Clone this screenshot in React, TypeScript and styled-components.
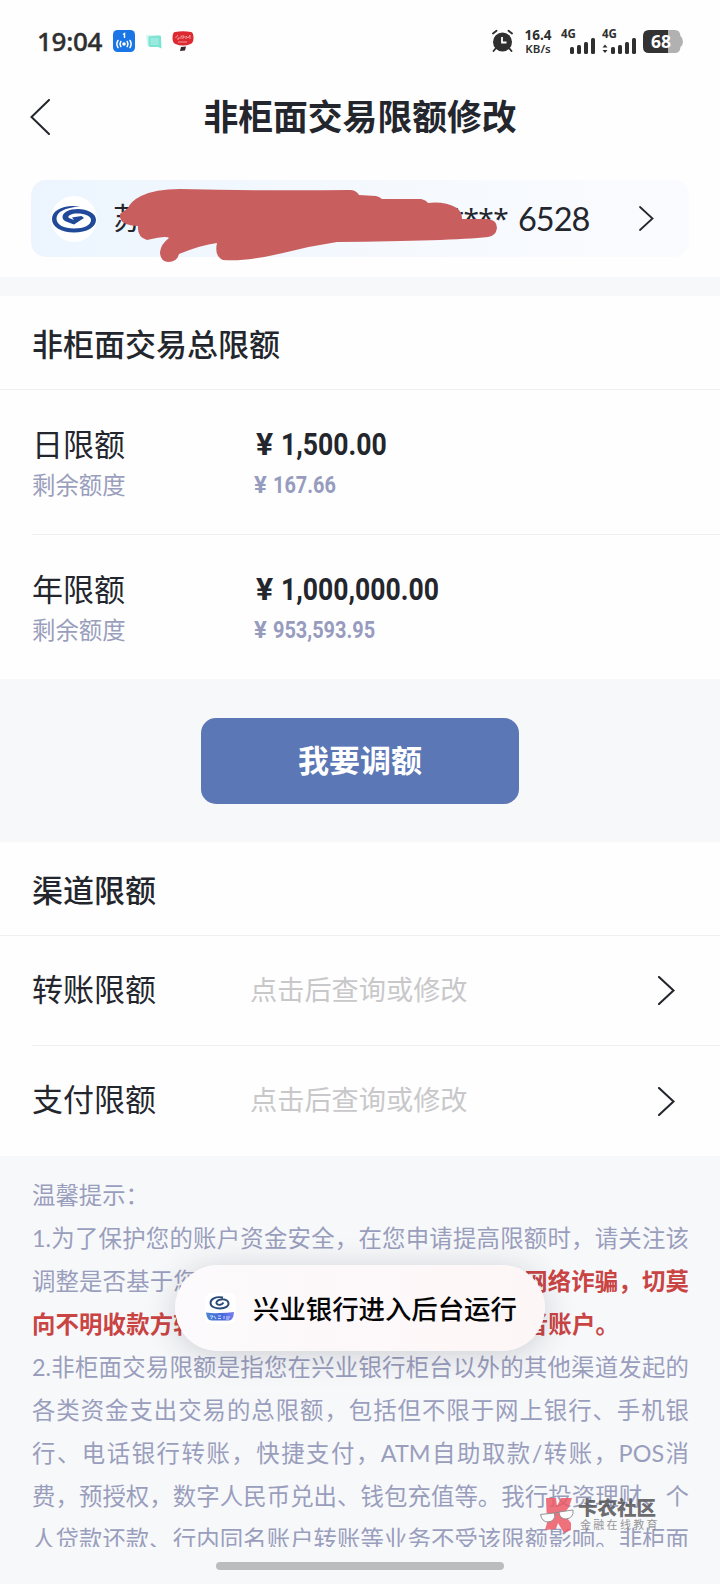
import React from 'react';
import styled, { createGlobalStyle } from 'styled-components';

const cjk = '"Noto Sans CJK SC", sans-serif';

const GlobalStyle = createGlobalStyle`
  * { box-sizing: border-box; }
  body { margin: 0; background: #f7f8fa; font-family: Lato, ${cjk}; color: #24262d; }
`;

const Screen = styled.main`
  position: relative;
  display: flex;
  flex-direction: column;
  width: 720px;
  height: 1584px;
  overflow: hidden;
  background: #f7f8fa;
`;

const StatusBar = styled.header`
  display: flex;
  align-items: center;
  height: 82px;
  padding: 0 37px 0 37px;
  background: #fefefe;
  color: #2f2f2f;
`;

const Clock = styled.span`
  width: 76px;
  margin-top: -1px;
  font: 500 26px/30px "Noto Sans", sans-serif;
  letter-spacing: -0.3px;
  white-space: nowrap;
  -webkit-text-stroke: 0.4px #2f2f2f;
`;

const StatusIcons = styled.div`
  flex: 1;
  display: flex;
  align-items: center;
`;

const NetSpeed = styled.div`
  display: flex;
  flex-direction: column;
  align-items: center;
  width: 28px;
  margin: 1px 9px 0 10px;
  font: 700 12px/12px "Noto Sans", sans-serif;
  white-space: nowrap;
`;

const SpeedValue = styled.span`
  font-size: 13.5px;
  line-height: 13px;
`;

const SpeedUnit = styled.span`
  font-size: 11.5px;
  line-height: 13px;
  font-weight: 600;
`;

const Signal = styled.svg`
  margin-right: 5px;
`;

const NavBar = styled.nav`
  display: flex;
  align-items: center;
  height: 70px;
  padding: 0 30px;
  background: #fefefe;
`;

const BackButton = styled.div`
  display: flex;
  margin-top: -1px;
`;

const NavTitle = styled.h1`
  flex: 1;
  margin: -5px 20px 0 0;
  text-align: center;
  font: 700 34.8px/50px ${cjk};
`;

const CardArea = styled.section`
  height: 125px;
  padding: 28px 31px 20px;
  background: #fefefe;
`;

const AccountCard = styled.div`
  position: relative;
  display: flex;
  align-items: center;
  height: 77px;
  padding: 0 35px 0 20px;
  border-radius: 15px;
  background: linear-gradient(90deg, #ecf5fe, #f5f9fe 55%, #fafbfe);
`;

const LogoDisc = styled.div`
  display: flex;
  align-items: center;
  justify-content: center;
  width: 46px;
  height: 46px;
  border-radius: 50%;
  background: #fff;
`;

const BankName = styled.span`
  margin: -5px 0 0 16px;
  font: 400 30px/44px ${cjk};
`;

const CardMask = styled.span`
  margin-left: auto;
  margin-top: -1px;
  font: 400 28px/40px "Noto Sans", sans-serif;
  letter-spacing: -0.6px;
`;

const CardTail = styled.span`
  width: 75px;
  margin: 0 46px 0 10px;
  font: 400 32.5px/40px Lato, sans-serif;
  letter-spacing: -1px;
`;

const Scribble = styled.svg`
  position: absolute;
  left: 84px;
  top: 4px;
`;

const Panel = styled.section<{ $top?: number }>`
  margin-top: ${(p) => p.$top ?? 0}px;
  background: #fefefe;
`;

const PanelTitle = styled.h2`
  height: 94px;
  margin: 0;
  padding: 0 32px;
  border-bottom: 1px solid #efeff1;
  font: 500 31px/94px ${cjk};
`;

const LimitRow = styled.div<{ $last?: boolean }>`
  display: grid;
  grid-template-columns: 220px 1fr;
  grid-template-rows: 46px 36px;
  align-items: center;
  height: ${(p) => (p.$last ? 144 : 145)}px;
  margin-left: 32px;
  padding-top: 30px;
  border-bottom: ${(p) => (p.$last ? 0 : 1)}px solid #efeff1;
`;

const Label = styled.span`
  font: 400 31px/46px ${cjk};
`;

const SubLabel = styled.span`
  color: #9a9ebd;
  font: 400 23.4px/36px ${cjk};
`;

const Amount = styled.span<{ $small?: boolean }>`
  display: flex;
  align-items: center;
  gap: ${(p) => (p.$small ? 6 : 8)}px;
  padding: ${(p) => (p.$small ? '1px 0 0 2px' : '1px 0 0 4px')};
  color: ${(p) => (p.$small ? '#979cbf' : '#24262d')};
  font: 700 ${(p) => (p.$small ? '24px/36px' : '32px/46px')} Roboto, sans-serif;
`;

const Digits = styled.span`
  transform: scaleX(0.83);
  transform-origin: left center;
`;

const ActionArea = styled.div`
  display: flex;
  justify-content: center;
  padding: 39px 0 38px;
`;

const PrimaryButton = styled.button`
  width: 318px;
  height: 86px;
  padding: 0 0 5px;
  border: 0;
  border-radius: 15px;
  background: #5b77b5;
  color: #fff;
  font: 700 31px/78px ${cjk};
`;

const LinkRow = styled.div<{ $last?: boolean }>`
  display: flex;
  align-items: center;
  height: 110px;
  margin-left: 32px;
  padding-right: 45px;
  border-bottom: ${(p) => (p.$last ? 0 : 1)}px solid #efeff1;
`;

const LinkLabel = styled(Label)`
  width: 218px;
  margin-top: -6px;
`;

const Placeholder = styled.span`
  flex: 1;
  margin-top: -6px;
  color: #c8c8ca;
  font: 400 27.2px/40px ${cjk};
`;

const Tips = styled.section`
  height: 391px;
  padding: 18px 31px 0 32px;
  overflow: hidden;
  color: #9a9ebd;
  font: 400 23.4px/43px Lato, ${cjk};
`;

const TipLine = styled.div<{ $natural?: boolean }>`
  height: 43px;
  white-space: nowrap;
  text-align: justify;
  text-align-last: ${(p) => (p.$natural ? 'left' : 'justify')};
`;

const TipSplit = styled.div<{ $end: number }>`
  display: flex;
  justify-content: space-between;
  height: 43px;
  padding-right: ${(p) => p.$end}px;
  letter-spacing: 0.15px;
`;

const Warning = styled.strong`
  color: #c94443;
  font-weight: 700;
`;

const Toast = styled.div`
  position: absolute;
  left: 175px;
  top: 1265px;
  display: flex;
  align-items: center;
  width: 370px;
  height: 86px;
  padding-left: 30px;
  border-radius: 43px;
  background: linear-gradient(90deg, #fcfafc, #fdf7f8 75%, #fcf6f7);
  box-shadow: 0 4px 32px rgba(40, 44, 60, 0.2);
  color: #050505;
`;

const ToastText = styled.span`
  margin: -1px 0 0 17px;
  font: 500 26.4px/40px ${cjk};
`;

const Watermark = styled.div`
  position: absolute;
  left: 540px;
  top: 1496px;
  display: flex;
  gap: 4px;
  opacity: 0.85;
`;

const WatermarkText = styled.div`
  display: flex;
  flex-direction: column;
  color: #555558;
  font-family: ${cjk};
`;

const WatermarkName = styled.span`
  font-size: 19.5px;
  font-weight: 900;
  line-height: 22px;
`;

const WatermarkSub = styled.span`
  padding-left: 2px;
  color: #858588;
  font-size: 11px;
  line-height: 13px;
  letter-spacing: 2.3px;
`;

const HomeBar = styled.div`
  position: absolute;
  left: 216px;
  top: 1562px;
  width: 288px;
  height: 8px;
  border-radius: 4px;
  background: #babcbd;
`;

const BankLogo = () => (
  <svg width="44" height="28" viewBox="0 0 44 28" fill="#20499a">
    <path d="M28 1.500 C12 -1 0 5 0 14 C0 22 9 27.500 22 27.500 C35 27.500 44 22 44 15 C44 8 35 4 26 4 C17 4 10.500 7.500 10.500 12 C10.500 14 12 15.500 14 16.500 L22 19.500 L32 13 L29.500 11 L20 12.500 L22 15 L17 13 C15 11.500 18 8.500 25 8.500 C33 8.500 39 11 39 15 C39 20 32 23.500 22 23.500 C12 23.500 4.500 20 4.500 13.500 C4.500 7 13 2.500 28 1.500 Z" />
  </svg>
);

const Chevron = ({ w, h, stroke, flip }: { w: number; h: number; stroke: number; flip?: boolean }) => (
  <svg width={w} height={h} viewBox={`0 0 ${w} ${h}`} fill="none" stroke="#24262d" strokeWidth={stroke} strokeLinecap="round">
    <path d={flip ? `M${w - 1} 1 L1.500 ${h / 2} L${w - 1} ${h - 1}` : `M1 1 L${w - 1.5} ${h / 2} L1 ${h - 1}`} />
  </svg>
);

const HotspotIcon = () => (
  <svg width="22" height="22" viewBox="0 0 22 22">
    <rect width="22" height="22" rx="4.500" fill="#1a76e6" />
    <path d="M10 4.500 L11.500 3.500 V8" stroke="#fff" strokeWidth="1.400" fill="none" />
    <circle cx="11" cy="14" r="1.800" fill="#fff" />
    <g stroke="#fff" strokeWidth="1.500" fill="none" strokeLinecap="round">
      <path d="M7.800 11.500 Q6.200 14 7.800 16.500 M14.200 11.500 Q15.800 14 14.200 16.500 M5 10.500 Q2.700 14 5 17.500 M17 10.500 Q19.300 14 17 17.500" />
    </g>
  </svg>
);

const NoteSvg = styled.svg`
  margin-left: 11px;
`;

const NoteIcon = () => (
  <NoteSvg width="16" height="15" viewBox="0 0 16 15">
    <path d="M0 1 H13 V12 H1.500 Z" fill="#d3f7ee" />
    <path d="M2.500 2.500 L14 1.500 Q15 1.500 15 3 L15.500 14.500 L12 13 H4 Q2.500 13 2.500 11 Z" fill="#7fe3d3" />
    <path d="M4.500 4 H12.500 V11 H4.500 Z" fill="#98ebde" />
  </NoteSvg>
);

const SignSvg = styled.svg`
  margin-left: 10px;
`;

const SignIcon = () => (
  <SignSvg width="22" height="21" viewBox="0 0 22 21">
    <path d="M9 16 L14 15.500 L13 19.500 L8 20 Z" fill="#3a2a2c" />
    <path d="M3 1 Q11 -0.500 19 1 Q21.500 1.500 21.500 7 Q21.500 12 18.500 13 Q15 14.500 11 14.500 Q7 14.500 3.500 13 Q0.500 12 0.500 7 Q0.500 1.500 3 1 Z" fill="#dd2a30" />
    <path d="M3.500 7 L6 4 M5 8 H7 V6 M9 8 V5 H12 V7 H10 M14 8 V5 L16 7 L18 4 V8 M6 11 H15" stroke="#f7b6b4" strokeWidth="0.800" fill="none" />
  </SignSvg>
);

const AlarmIcon = () => (
  <svg width="23" height="24" viewBox="0 0 23 24" fill="none" stroke="#2f2f2f">
    <circle cx="11.500" cy="13" r="9.500" fill="#2f2f2f" stroke="none" />
    <path d="M2 4.500 L5.500 1.800 M21 4.500 L17.500 1.800 M5 19 L2.500 22 M18 19 L20.500 22" strokeWidth="1.900" strokeLinecap="round" />
    <path d="M11 8 V13.500 H15.500" stroke="#fff" strokeWidth="1.800" />
  </svg>
);

const SignalBars = ({ data }: { data?: boolean }) => (
  <Signal width="36" height="30" viewBox="0 -3 36 30" fill="#2f2f2f">
    <text x="0" y="9" fontFamily="Noto Sans, sans-serif" fontWeight="700" fontSize="11.500">4G</text>
    {data && <path d="M0.500 18.500 L3 15.500 L5.500 18.500 Z M0.500 21 L3 24 L5.500 21 Z" />}
    <rect x="9" y="18" width="4" height="7" rx="1.500" />
    <rect x="16" y="16" width="4" height="9" rx="1.500" />
    <rect x="23" y="13" width="4" height="12" rx="1.500" />
    <rect x="30" y="9" width="4" height="16" rx="1.500" />
  </Signal>
);

const BatteryIcon = () => (
  <svg width="40" height="23" viewBox="0 0 40 23">
    <path d="M25 0 H32 Q37 0 37.500 6 Q40 8 40 11.500 Q40 15 37.500 17 Q37 23 32 23 H25 Z" fill="#b1b1b1" />
    <path d="M6 0 H25 V23 H6 Q0 23 0 17 V6 Q0 0 6 0 Z" fill="#333" />
    <text x="18" y="17.500" textAnchor="middle" fill="#fff" fontFamily="Noto Sans, sans-serif" fontWeight="700" fontSize="17.500">68</text>
  </svg>
);

const ToastIcon = () => (
  <svg width="31" height="31" viewBox="0 0 31 31">
    <defs>
      <linearGradient id="toastBand" x1="0" x2="1">
        <stop offset="0" stopColor="#4a86cf" />
        <stop offset="0.6" stopColor="#4a68dc" />
        <stop offset="1" stopColor="#7a7ff0" />
      </linearGradient>
    </defs>
    <rect width="31" height="31" rx="7" fill="#fff" />
    <path
      d="M18 4.500 C10 3 5.500 6.500 5.500 10 C5.500 14 11 15.500 15 15.500 C20.500 15.500 24 13 23.500 10 C23 7 19 5.800 16 6.500 C12 7 10.500 9.500 12 11 C13.500 12.500 17 12 18.500 9.500"
      fill="none"
      stroke="#2a4a78"
      strokeWidth="1.900"
    />
    <path d="M1 19.500 Q8 20.500 15 20 Q22 20 29 19 Q28.500 27.500 24 27.500 H7 Q2 28 1 19.500 Z" fill="url(#toastBand)" />
    <path d="M5 23 H8 L6 26 M9 23 L11 26 M13 23 H16 M13 25.500 H16 M19 23 V26 M21 24 H25 M21 26 H24" stroke="#dbe5ff" strokeWidth="0.900" fill="none" />
  </svg>
);

const WatermarkMark = () => (
  <svg width="34" height="38" viewBox="0 0 34 38">
    <path d="M6 2 H16 L17 10 L21 2 H32 L29 11 L24 18 L31 27 V34 L24 37 L18 27 L16 33 L5 34 L7 27 Z" fill="#ee5a67" />
    <path d="M1 18 L14.500 17 Q16 25 8 26 Q2 26 1 18 Z M19 16 L33 14 Q34 22 26 23 Q19.500 23 19 16 Z" fill="#fff" />
    <path d="M0.500 18.500 L14.500 17 Q16 25 8 26 Q2 26 0.500 18.500 Z M14.500 17 L19 16 L33 14 Q34 22 26 23 Q19.500 23 19 16" fill="none" stroke="#77777a" strokeWidth="0.900" />
  </svg>
);

type LimitProps = { label: string; total: string; rest: string; last?: boolean };

const Limit = ({ label, total, rest, last }: LimitProps) => (
  <LimitRow $last={last}>
    <Label>{label}</Label>
    <Amount>¥<Digits>{total}</Digits></Amount>
    <SubLabel>剩余额度</SubLabel>
    <Amount $small>¥<Digits>{rest}</Digits></Amount>
  </LimitRow>
);

const Channel = ({ label, last }: { label: string; last?: boolean }) => (
  <LinkRow $last={last}>
    <LinkLabel>{label}</LinkLabel>
    <Placeholder>点击后查询或修改</Placeholder>
    <Chevron w={17} h={29} stroke={2.1} />
  </LinkRow>
);

export default function App() {
  return (
    <Screen>
      <GlobalStyle />
      <StatusBar>
        <Clock>19:04</Clock>
        <StatusIcons>
          <HotspotIcon />
          <NoteIcon />
          <SignIcon />
        </StatusIcons>
        <AlarmIcon />
        <NetSpeed>
          <SpeedValue>16.4</SpeedValue>
          <SpeedUnit>KB/s</SpeedUnit>
        </NetSpeed>
        <SignalBars />
        <SignalBars data />
        <BatteryIcon />
      </StatusBar>

      <NavBar>
        <BackButton><Chevron w={20} h={36} stroke={2} flip /></BackButton>
        <NavTitle>非柜面交易限额修改</NavTitle>
      </NavBar>

      <CardArea>
        <AccountCard>
          <LogoDisc><BankLogo /></LogoDisc>
          <BankName>苏</BankName>
          <CardMask>****</CardMask>
          <CardTail>6528</CardTail>
          <Chevron w={15} h={25} stroke={1.8} />
          <Scribble width="390" height="84" viewBox="115 184 390 84" fill="#c95e5f">
            <path d="M128 208 Q131 201 141 196 Q155 189 180 189 Q265 191 350 190 Q356 190 359 195 L376 196 Q380 197 382 199 L421 199 Q426 200 428 203 Q444 201 457 208 Q462 212 462 219 L488 219 Q497 220 497 228 Q496 236 488 237 Q450 241 337 242 Q310 246 283 253 Q245 262 223 260 Q214 256 217 243 Q201 245 179 254 Q177 262 168 262 Q160 261 160 252 Q161 244 169 238 Q167 235 147 240 Q137 237 138 226 Q130 226 124 223 Q119 219 120 214 Z" />
          </Scribble>
        </AccountCard>
      </CardArea>

      <Panel $top={19}>
        <PanelTitle>非柜面交易总限额</PanelTitle>
        <Limit label="日限额" total="1,500.00" rest="167.66" />
        <Limit label="年限额" total="1,000,000.00" rest="953,593.95" last />
      </Panel>

      <ActionArea>
        <PrimaryButton>我要调额</PrimaryButton>
      </ActionArea>

      <Panel>
        <PanelTitle>渠道限额</PanelTitle>
        <Channel label="转账限额" />
        <Channel label="支付限额" last />
      </Panel>

      <Tips>
        <TipLine $natural>温馨提示：</TipLine>
        <TipLine>1.为了保护您的账户资金安全，在您申请提高限额时，请关注该</TipLine>
        <TipSplit $end={0}>
          <span>调整是否基于您</span>
          <Warning>网络诈骗，切莫</Warning>
        </TipSplit>
        <TipSplit $end={70}>
          <Warning>向不明收款方转</Warning>
          <Warning>者账户。</Warning>
        </TipSplit>
        <TipLine>2.非柜面交易限额是指您在兴业银行柜台以外的其他渠道发起的</TipLine>
        <TipLine>各类资金支出交易的总限额，包括但不限于网上银行、手机银</TipLine>
        <TipLine>行、电话银行转账，快捷支付，ATM自助取款/转账，POS消</TipLine>
        <TipLine>费，预授权，数字人民币兑出、钱包充值等。我行投资理财、个</TipLine>
        <TipLine>人贷款还款、行内同名账户转账等业务不受该限额影响。非柜面</TipLine>
      </Tips>

      <Watermark>
        <WatermarkMark />
        <WatermarkText>
          <WatermarkName>卡农社区</WatermarkName>
          <WatermarkSub>金融在线教育</WatermarkSub>
        </WatermarkText>
      </Watermark>

      <Toast>
        <ToastIcon />
        <ToastText>兴业银行进入后台运行</ToastText>
      </Toast>
      <HomeBar />
    </Screen>
  );
}
